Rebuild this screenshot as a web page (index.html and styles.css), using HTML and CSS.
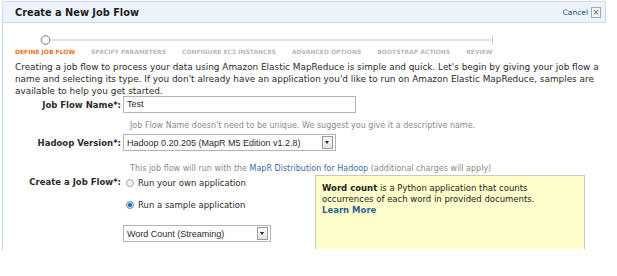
FILE: index.html
```html
<!DOCTYPE html>
<html lang="en">
<head>
  <meta charset="UTF-8" />
  <title>Create a New Job Flow</title>
  <link rel="stylesheet" href="styles.css">
</head>
<body>
  <div class="panel">
    <div class="head">
      <h1>Create a New Job Flow</h1>
      <div class="cancel">
        <a href="#">Cancel</a>
        <span class="close">&#215;</span>
      </div>
    </div>

    <div class="content">
      <div class="progress">
        <svg class="track" width="480" height="10" viewBox="0 0 480 10">
          <defs>
            <linearGradient id="fade" x1="0" x2="1" y1="0" y2="0">
              <stop offset="0" stop-color="#f7d2b0" />
              <stop offset="1" stop-color="#ec8a3c" />
            </linearGradient>
          </defs>
          <line x1="0" y1="5" x2="26" y2="5" stroke="url(#fade)" stroke-width="1" />
          <line x1="35" y1="5" x2="477" y2="5" stroke="#c8c8c8" stroke-width="1" />
          <line x1="477.5" y1="1" x2="477.5" y2="9" stroke="#c8c8c8" stroke-width="1" />
          <circle cx="30.5" cy="5" r="4.3" fill="#fff" stroke="#7a7a7a" stroke-width="1" />
        </svg>
        <div class="steps">
          <span class="step active">DEFINE JOB FLOW</span>
          <span class="step">SPECIFY PARAMETERS</span>
          <span class="step">CONFIGURE EC2 INSTANCES</span>
          <span class="step">ADVANCED OPTIONS</span>
          <span class="step">BOOTSTRAP ACTIONS</span>
          <span class="step">REVIEW</span>
        </div>
      </div>

      <p class="intro">Creating a job flow to process your data using Amazon Elastic MapReduce is simple and quick. Let's begin by giving your job flow a name and selecting its type. If you don't already have an application you'd like to run on Amazon Elastic MapReduce, samples are available to help you get started.</p>

      <div class="row first">
        <label class="label">Job Flow Name*:</label>
        <div class="textbox">Test</div>
      </div>
      <div class="hint">Job Flow Name doesn't need to be unique. We suggest you give it a descriptive name.</div>

      <div class="row">
        <label class="label">Hadoop Version*:</label>
        <div class="select version">
          <span>Hadoop 0.20.205 (MapR M5 Edition v1.2.8)</span>
          <span class="arrow"></span>
        </div>
      </div>
      <div class="hint hint-2">This job flow will run with the <a href="#">MapR Distribution for Hadoop</a> (additional charges will apply)</div>

      <div class="row create">
        <label class="label">Create a Job Flow*:</label>
        <div class="choices">
          <div class="choice"><span class="radio"></span>Run your own application</div>
          <div class="choice"><span class="radio checked"></span>Run a sample application</div>
          <div class="select sample">
            <span>Word Count (Streaming)</span>
            <span class="arrow"></span>
          </div>
        </div>
        <div class="info">
          <p class="info-text"><b>Word count</b> is a Python application that counts occurrences of each word in provided documents.</p>
          <a href="#" class="more">Learn More</a>
        </div>
      </div>
    </div>
  </div>
</body>
</html>
```

FILE: styles.css
```css
body {
  margin: 0;
  background: #ffffff;
  font-family: "DejaVu Sans", Verdana, sans-serif;
  font-size: 8.5px;
  color: #2b2b2b;
}
a {
  color: #1f5c9e;
  text-decoration: none;
}
.panel {
  margin: 1px 0 0 2px;
  width: 604px;
}
.head {
  height: 20px;
  border: 1px solid #c9dcf0;
  background-color: #edf3fb;
  display: flex;
  align-items: center;
  justify-content: space-between;
  padding: 0 4px 0 12px;
}
h1 {
  margin: 0;
  font-size: 9.8px;
  font-weight: bold;
  color: #1e1e1e;
}
.cancel {
  display: flex;
  align-items: center;
  gap: 3px;
}
.cancel a {
  font-size: 7.5px;
  color: #23508c;
}
.close {
  width: 8px;
  height: 9px;
  border: 1px solid #a9a9a9;
  background: #f4f4f4;
  color: #555;
  font-size: 8px;
  line-height: 9px;
  text-align: center;
}
.content {
  border-left: 1px solid #b9dcf6;
  padding: 0 0 0 12px;
  height: 227px;
}
.progress {
  padding-top: 12px;
}
.track {
  display: block;
}
.steps {
  display: flex;
  gap: 16px;
  margin-top: 3px;
}
.step {
  font-size: 6px;
  font-weight: bold;
  color: #b9b9b9;
}
.step.active {
  color: #e2782a;
}
.intro {
  margin: 6px 0 0 0;
  width: 594px;
  font-size: 8.9px;
  line-height: 12px;
}
.row {
  display: flex;
  align-items: center;
  margin-top: 3px;
}
.row.first {
  margin-top: -1px;
}
.label {
  width: 106px;
  flex: none;
  text-align: right;
  font-weight: bold;
  margin-right: 2px;
  white-space: nowrap;
}
.textbox {
  width: 228px;
  height: 15px;
  border: 1px solid #b4b4b4;
  padding-left: 3px;
  font-family: "Liberation Sans", Arial, sans-serif;
  font-size: 9px;
  line-height: 15px;
}
.hint {
  margin: 8px 0 0 115px;
  font-size: 8px;
  color: #8a8a8a;
  line-height: 10px;
}
.hint-2 {
  margin-top: 13px;
}
.hint-2 a {
  color: #3a6ea8;
}
.select {
  height: 15px;
  border: 1px solid #b4b4b4;
  padding-left: 3px;
  display: flex;
  align-items: center;
  justify-content: space-between;
  font-family: "Liberation Sans", Arial, sans-serif;
  font-size: 9px;
}
.version {
  width: 208px;
}
.arrow {
  width: 9px;
  height: 11px;
  margin-right: 2px;
  border: 1px solid #9b9b9b;
  background: linear-gradient(#fbfbfb, #e3e3e3);
  position: relative;
}
.arrow::after {
  content: "";
  position: absolute;
  left: 2px;
  top: 4px;
  border-left: 2.5px solid transparent;
  border-right: 2.5px solid transparent;
  border-top: 3px solid #222;
}
.create {
  align-items: flex-start;
  margin-top: 0;
}
.create .label {
  margin-top: 3px;
}
.choices {
  width: 188px;
  flex: none;
  padding-left: 3px;
}
.choice {
  display: flex;
  align-items: center;
  gap: 4px;
  height: 12px;
  margin-top: 3px;
  margin-bottom: 10px;
}
.radio {
  width: 6px;
  height: 6px;
  border: 1px solid #a8a8a8;
  border-radius: 50%;
  background: #f2f2f2;
}
.radio.checked {
  background: radial-gradient(circle, #2b6fb0 0 1.8px, #cfe3f4 2.3px);
  border-color: #6b8fb3;
}
.sample {
  width: 143px;
  margin: 14px 0 0 -3px;
}
.info {
  width: 262px;
  height: 66px;
  margin-left: 1px;
  margin-top: 1px;
  padding: 7px 0 0 6px;
  background-color: #ffffcc;
  border: 1px solid #c9c9c9;
  border-bottom: none;
  line-height: 11px;
  color: #222;
}
.info-text {
  margin: 0;
  width: 222px;
}
.more {
  font-weight: bold;
  color: #2d5f97;
}
```
